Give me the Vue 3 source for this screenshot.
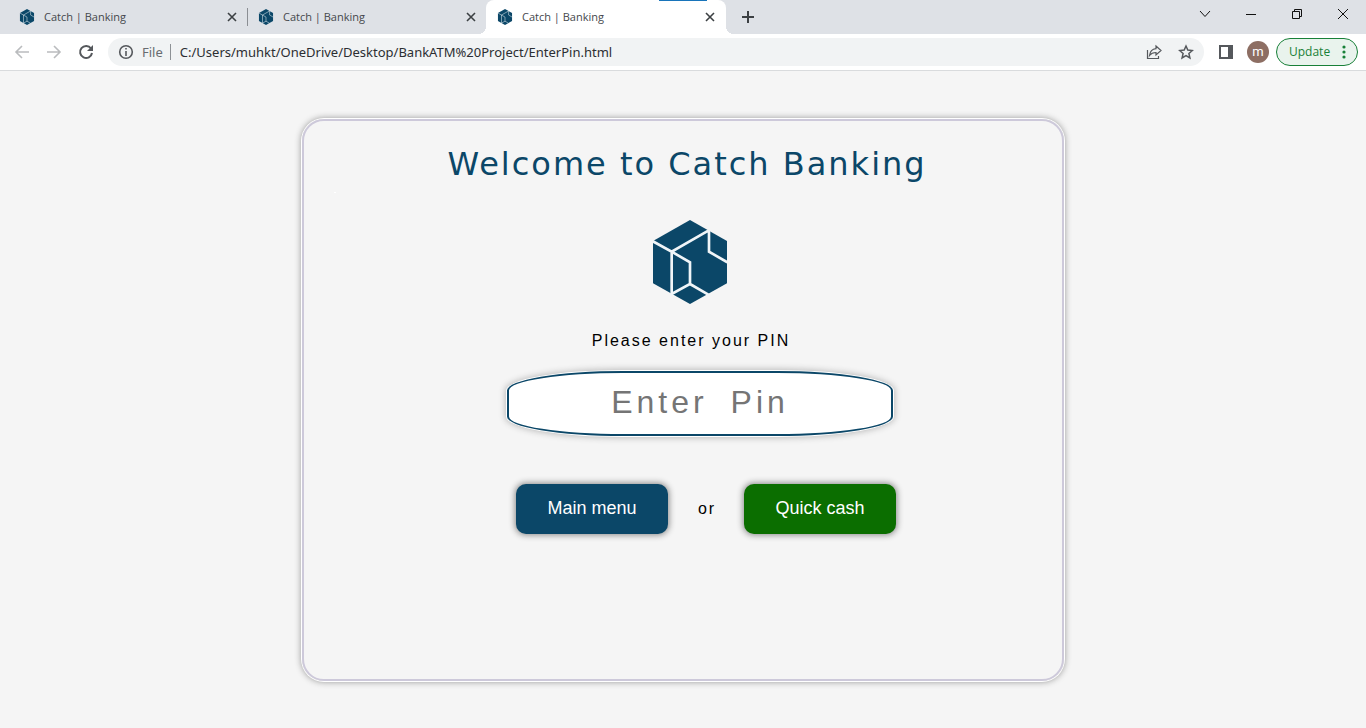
<script setup>
import { ref } from 'vue'

const tabs = [
  { id: 1, title: 'Catch | Banking', active: false },
  { id: 2, title: 'Catch | Banking', active: false },
  { id: 3, title: 'Catch | Banking', active: true },
]
const address = ref('C:/Users/muhkt/OneDrive/Desktop/BankATM%20Project/EnterPin.html')
const pin = ref('')
</script>

<template>
  <div class="browser">
    <svg class="defs" width="0" height="0" aria-hidden="true">
      <symbol id="catch-logo" viewBox="39 30 222 252">
        <path fill="#0b4768" d="M150 30 261 93V220L150 282 39 220V93Z" />
        <path
          fill="none"
          stroke="#f0f5f8"
          stroke-width="8"
          d="M37 93 95 125 205 62M95 125V252L150 222V157L95 125M150 222 205 254M207 60V125L262 157"
        />
      </symbol>
    </svg>

    <header class="chrome">
      <div class="tabstrip">
        <div v-for="tab in tabs" :key="tab.id" class="tab" :class="{ active: tab.active }">
          <svg class="favicon" aria-hidden="true"><use href="#catch-logo" /></svg>
          <span class="tab-title">{{ tab.title }}</span>
          <button class="tab-close" type="button" aria-label="Close tab">
            <svg width="10" height="10" viewBox="0 0 10 10"><path d="M1 1 9 9M9 1 1 9" /></svg>
          </button>
        </div>
        <button class="new-tab" type="button" aria-label="New tab">
          <svg width="12" height="12" viewBox="0 0 12 12"><path d="M6 0V12M0 6H12" /></svg>
        </button>
        <div class="window-controls">
          <button type="button" aria-label="Search tabs">
            <svg width="12" height="12" viewBox="0 0 12 12"><path d="M1 3 6 8.500 11 3" /></svg>
          </button>
          <button type="button" aria-label="Minimize">
            <svg width="12" height="12" viewBox="0 0 12 12"><path d="M1 6.500H11" /></svg>
          </button>
          <button type="button" aria-label="Restore">
            <svg width="12" height="12" viewBox="0 0 12 12">
              <path d="M1.500 3.500H8.500V10.500H1.500ZM3.500 3.500V1.500H10.500V8.500H8.500" />
            </svg>
          </button>
          <button type="button" aria-label="Close window">
            <svg width="12" height="12" viewBox="0 0 12 12"><path d="M1 1 11 11M11 1 1 11" /></svg>
          </button>
        </div>
      </div>

      <div class="toolbar">
        <div class="nav">
          <button class="faded" type="button" aria-label="Back">
            <svg width="16" height="16" viewBox="0 0 16 16"><path d="M15 8H2M8 2 2 8 8 14" /></svg>
          </button>
          <button class="faded" type="button" aria-label="Forward">
            <svg width="16" height="16" viewBox="0 0 16 16"><path d="M1 8H14M8 2 14 8 8 14" /></svg>
          </button>
          <button type="button" aria-label="Reload">
            <svg width="16" height="16" viewBox="0 0 16 16">
              <path stroke-width="2" d="M13 4.500A6 6 0 1 0 14 9" />
              <path fill="#55585c" stroke="none" d="M15 1V7H9Z" />
            </svg>
          </button>
        </div>
        <div class="omnibox">
          <svg class="info" width="16" height="16" viewBox="0 0 16 16" aria-hidden="true">
            <circle cx="8" cy="8" r="6.300" />
            <path d="M8 7V12M8 4V5.600" />
          </svg>
          <label class="scheme" for="address">File</label>
          <input id="address" v-model="address" class="address" type="text" spellcheck="false" />
          <button type="button" aria-label="Share">
            <svg width="16" height="16" viewBox="0 0 16 16">
              <path
                stroke-width="1.200"
                d="M1.500 6V14.500H12.500V12M10 2 15 6.500 10 11V8.500C7 8.500 5 9.500 3.500 11.500 4 7.500 6 5 10 4.600Z"
              />
            </svg>
          </button>
          <button type="button" aria-label="Bookmark this page">
            <svg width="16" height="16" viewBox="0 0 16 16">
              <path
                stroke-width="1.500"
                d="M8 2 9.800 6.100 14.300 6.500 10.900 9.500 11.900 13.900 8 11.600 4.100 13.900 5.100 9.500 1.700 6.500 6.200 6.100Z"
              />
            </svg>
          </button>
        </div>
        <button class="panel" type="button" aria-label="Side panel">
          <svg width="14" height="14" viewBox="0 0 14 14">
            <path fill="#55585c" stroke="none" fill-rule="evenodd" d="M0 0H14V14H0ZM2 2V12H9V2Z" />
          </svg>
        </button>
        <button class="avatar" type="button" aria-label="Profile">m</button>
        <button class="update" type="button">
          <span>Update</span>
          <svg width="4" height="14" viewBox="0 0 4 14" aria-hidden="true">
            <circle cx="2" cy="2" r="1.600" />
            <circle cx="2" cy="7" r="1.600" />
            <circle cx="2" cy="12" r="1.600" />
          </svg>
        </button>
      </div>
    </header>

    <main class="page">
      <form class="card" @submit.prevent>
        <h1>Welcome to Catch Banking</h1>
        <svg class="logo" role="img" aria-label="Catch Banking"><use href="#catch-logo" /></svg>
        <label class="prompt" for="pin">Please enter your PIN</label>
        <input id="pin" v-model="pin" class="pin" type="text" placeholder="Enter Pin" />
        <div class="actions">
          <button class="action menu" type="button">Main menu</button>
          <span>or</span>
          <button class="action cash" type="button">Quick cash</button>
        </div>
      </form>
    </main>
  </div>
</template>

<style>
body {
  background: #f5f5f5;
}
</style>

<style scoped>
* {
  box-sizing: border-box;
}

.browser {
  display: flex;
  flex-direction: column;
  min-height: 100vh;
  font-family: 'Liberation Sans', Arial, sans-serif;
}

.defs {
  position: absolute;
}

button {
  display: flex;
  align-items: center;
  justify-content: center;
  margin: 0;
  padding: 0;
  border: 0;
  background: none;
}

button svg,
.info {
  fill: none;
  stroke: #55585c;
}

.chrome {
  border-bottom: 1px solid #d9dbdd;
  background: #fff;
  font-family: 'Noto Sans', 'Open Sans', sans-serif;
}

.tabstrip {
  position: relative;
  display: flex;
  height: 34px;
  padding-left: 8px;
  background: #dee1e6;
}

.tabstrip::before {
  content: '';
  position: absolute;
  top: 0;
  left: 659px;
  z-index: 2;
  width: 48px;
  height: 1px;
  background: #1874ba;
}

.tab {
  display: flex;
  align-items: center;
  width: 239px;
  padding: 0 9px 0 11px;
  color: #45484c;
  font-family: 'Open Sans', 'Noto Sans', sans-serif;
  font-size: 11px;
  line-height: 16px;
}

.tab:nth-child(2) {
  background: linear-gradient(#8b8e93, #8b8e93) left center / 1px 18px no-repeat;
}

.tab.active {
  position: relative;
  width: 240px;
  padding-right: 10px;
  border-radius: 8px 8px 0 0;
  background: #fff;
}

.tab.active::before,
.tab.active::after {
  content: '';
  position: absolute;
  bottom: 0;
  width: 8px;
  height: 8px;
}

.tab.active::before {
  right: 100%;
  background: radial-gradient(circle at 0 0, transparent 8px, #fff 8px);
}

.tab.active::after {
  left: 100%;
  background: radial-gradient(circle at 100% 0, transparent 8px, #fff 8px);
}

.favicon {
  width: 16px;
  height: 16px;
  margin-right: 9px;
}

.tab-title {
  flex: 1;
  white-space: nowrap;
}

.tab-close {
  width: 12px;
  height: 16px;
}

.tab-close svg {
  stroke: #3c4043;
  stroke-width: 1.6;
}

.new-tab {
  width: 28px;
  margin-left: 8px;
}

.new-tab svg {
  stroke: #3c4043;
  stroke-width: 2;
}

.window-controls {
  display: flex;
  align-items: center;
  margin-left: auto;
  padding-bottom: 6px;
}

.window-controls button {
  width: 46px;
  height: 28px;
}

.window-controls svg {
  stroke: #111;
}

.toolbar {
  display: flex;
  align-items: center;
  height: 36px;
  padding: 0 8px 0 6px;
}

.nav {
  display: flex;
  margin-right: 6px;
}

.nav button {
  width: 32px;
  height: 28px;
}

.nav svg {
  stroke-width: 1.6;
}

.nav .faded svg {
  stroke: #babcbe;
}

.omnibox {
  display: flex;
  flex: 1;
  align-items: center;
  height: 28px;
  padding: 0 10px;
  border-radius: 14px;
  background: #f1f3f4;
}

.info {
  flex: none;
  stroke-width: 1.6;
}

.scheme {
  margin-left: 8px;
  padding-right: 7px;
  border-right: 1px solid #8d9195;
  color: #686c70;
  font-size: 13px;
  line-height: 16px;
}

.address {
  flex: 1;
  min-width: 0;
  margin: 0;
  padding: 0 0 0 9px;
  border: 0;
  outline: 0;
  background: none;
  color: #2b2e32;
  font-family: inherit;
  font-size: 13px;
  line-height: 16px;
}

.omnibox button {
  width: 16px;
  height: 28px;
  margin-left: 16px;
}

.panel {
  width: 32px;
  height: 28px;
  margin-left: 6px;
}

.avatar {
  width: 22px;
  height: 22px;
  margin-left: 5px;
  border-radius: 50%;
  background: #8d6e63;
  color: #fff;
  font-family: Roboto, sans-serif;
  font-size: 13px;
  line-height: 16px;
}

.update {
  justify-content: space-between;
  width: 82px;
  height: 28px;
  margin-left: 7px;
  padding: 0 11px 0 12px;
  border: 1px solid #188038;
  border-radius: 14px;
  background: #e9f3ed;
  color: #188038;
  font-family: 'Open Sans', 'Noto Sans', sans-serif;
  font-size: 12px;
  line-height: 16px;
}

.update svg {
  fill: #188038;
  stroke: none;
}

.page {
  flex: 1;
  padding: 48px 24px 46px;
  background: #f5f5f5;
}

.card {
  position: relative;
  display: flex;
  flex-direction: column;
  align-items: center;
  max-width: 762px;
  min-height: 562px;
  margin: 0 auto;
  padding: 23px 0;
  border: 2px solid #cdc9da;
  border-radius: 22px;
  box-shadow: 0 0 0 1px #fff, 0 0 6px 1px #999;
}

.card::before {
  content: '';
  position: absolute;
  top: 71px;
  left: 30px;
  width: 2px;
  height: 1px;
  background: #fff;
}

h1 {
  margin: 0;
  padding-left: 8px;
  color: #0b4768;
  font-family: 'DejaVu Sans', Verdana, sans-serif;
  font-size: 32px;
  font-weight: 400;
  letter-spacing: 2px;
  line-height: 40px;
}

.logo {
  width: 74px;
  height: 84px;
  margin: 36px 0 27px 14px;
}

.prompt {
  margin-left: 16px;
  color: #000;
  font-size: 16px;
  letter-spacing: 2px;
  line-height: 20px;
}

.pin {
  width: 386px;
  max-width: 90%;
  height: 65px;
  margin: 20px 0 48px 34px;
  padding: 0 0 2px;
  border: 2px solid #0b4768;
  border-radius: 30%;
  outline: 0;
  background: #fff;
  box-shadow: 0 0 0 1px #fff, 0 0 6px 2px #bbb;
  font-family: inherit;
  font-size: 32px;
  letter-spacing: 4px;
  text-align: center;
}

.pin::placeholder {
  color: #757575;
  word-spacing: 10px;
}

.actions {
  display: flex;
  align-items: center;
  margin-left: 46px;
}

.actions span {
  width: 76px;
  padding-left: 2px;
  font-size: 16px;
  letter-spacing: 2px;
  text-align: center;
}

.action {
  width: 152px;
  height: 50px;
  padding-bottom: 2px;
  border-radius: 10px;
  box-shadow: 0 0 6px 1px #888;
  color: #fff;
  font-family: inherit;
  font-size: 18px;
}

.menu {
  background: #0b4768;
}

.cash {
  background: #0b6e00;
}
</style>
